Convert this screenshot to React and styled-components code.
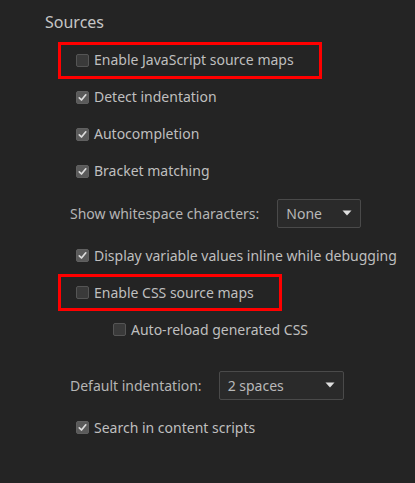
import React from "react";
import styled, { createGlobalStyle } from "styled-components";

const Global = createGlobalStyle`
  html, body { margin: 0; padding: 0; background: #242424; }
  body { font-family: "Noto Sans", "Open Sans", sans-serif; color: #bdbdbd; }
`;

const Page = styled.div`
  width: 415px;
  height: 483px;
  background: #242424;
  box-sizing: border-box;
  padding: 10px 0 0 45px;
  overflow: hidden;
`;

const Title = styled.div`
  font-size: 16px;
  line-height: 24px;
  color: #c6c6c6;
  height: 24px;
`;

const List = styled.div`
  display: flex;
  flex-direction: column;
  margin-top: 7.5px;
`;

const Row = styled.div`
  display: flex;
  align-items: center;
  height: 37px;
  box-sizing: border-box;
  margin-left: ${p => p.$indent || 13}px;
  padding-left: ${p => (p.$highlight ? 15 : 18)}px;
  padding-right: ${p => (p.$highlight ? 25 : 0)}px;
  border: ${p => (p.$highlight ? "3px solid #ff0000" : "none")};
  align-self: flex-start;
  font-size: 14px;
  color: #bfbfbf;
  margin-top: ${p => p.$mt || 0}px;
`;

const Box = styled.span`
  width: 13px;
  height: 13px;
  box-sizing: border-box;
  border-radius: 2px;
  border: 1px solid ${p => (p.$checked ? "#606060" : "#555")};
  background: ${p => (p.$checked ? "#5a5a5a" : "#3a3a3a")};
  display: inline-flex;
  align-items: center;
  justify-content: center;
  margin-right: 5px;
  flex: none;
`;

const Label = styled.span`
  white-space: nowrap;
  line-height: 18px;
`;

const SelectRow = styled.div`
  display: flex;
  align-items: center;
  margin-left: 25px;
  margin-top: ${p => p.$mt}px;
  height: 29px;
  font-size: 14px;
  color: #b5b5b5;
`;

const SelectLabel = styled.span`
  white-space: nowrap;
  margin-right: ${p => p.$gap}px;
`;

const Select = styled.div`
  width: ${p => p.$w}px;
  height: 29px;
  box-sizing: border-box;
  border: 1px solid #4a4a4a;
  border-radius: 2px;
  background: #2a2a2a;
  display: flex;
  align-items: center;
  justify-content: space-between;
  padding: 0 8px 0 8px;
  color: #b8b8b8;
  font-size: 14px;
`;

const Check = () => (
  <svg width="9" height="9" viewBox="0 0 9 9">
    <path d="M1.3 4.8 L3.5 7 L7.8 1.8" fill="none" stroke="#dcdcdc" strokeWidth="1.7" strokeLinecap="round" strokeLinejoin="round" />
  </svg>
);

const Arrow = () => (
  <svg width="10" height="6" viewBox="0 0 10 6">
    <path d="M0.5 0.5 L9.5 0.5 L5 5.5 Z" fill="#dedede" />
  </svg>
);

const Checkbox = ({ checked, children, ...rest }) => (
  <Row {...rest}>
    <Box $checked={checked}>{checked && <Check />}</Box>
    <Label>{children}</Label>
  </Row>
);

export default function App() {
  return (
    <>
      <Global />
      <Page>
        <Title>Sources</Title>
        <List>
          <Checkbox $highlight>Enable JavaScript source maps</Checkbox>
          <Checkbox checked>Detect indentation</Checkbox>
          <Checkbox checked>Autocompletion</Checkbox>
          <Checkbox checked>Bracket matching</Checkbox>
          <SelectRow $mt={9}>
            <SelectLabel $gap={18}>Show whitespace characters:</SelectLabel>
            <Select $w={84}>
              <span>None</span>
              <Arrow />
            </Select>
          </SelectRow>
          <Checkbox checked $mt={9.5}>Display variable values inline while debugging</Checkbox>
          <Checkbox $highlight>Enable CSS source maps</Checkbox>
          <Checkbox $indent={50}>Auto-reload generated CSS</Checkbox>
          <SelectRow $mt={22.5}>
            <SelectLabel $gap={17}>Default indentation:</SelectLabel>
            <Select $w={125}>
              <span>2 spaces</span>
              <Arrow />
            </Select>
          </SelectRow>
          <Checkbox checked $mt={9.5}>Search in content scripts</Checkbox>
        </List>
      </Page>
    </>
  );
}
